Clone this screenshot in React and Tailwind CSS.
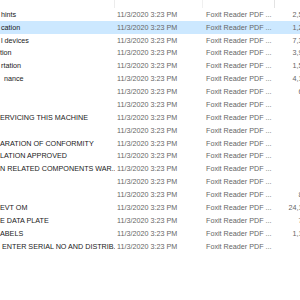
import React from 'react';

const rows = [
  { name: 'hints', indent: 'pl-[1px]', size: '2,512 KB' },
  { name: 'cation', indent: 'pl-[1px]', size: '1,204 KB', selected: true },
  { name: 'l devices', indent: 'pl-[1px]', size: '7,318 KB' },
  { name: 'tion', indent: 'pl-0', size: '3,941 KB' },
  { name: 'rtation', indent: 'pl-[1px]', size: '1,587 KB' },
  { name: 'nance', indent: 'pl-[4px]', size: '4,106 KB' },
  { name: '', indent: 'pl-0', size: '612 KB' },
  { name: '', indent: 'pl-0', size: '88 KB' },
  { name: 'ERVICING THIS MACHINE', indent: 'pl-0', size: '95 KB' },
  { name: '', indent: 'pl-0', size: '74 KB' },
  { name: 'ARATION OF CONFORMITY', indent: 'pl-0', size: '81 KB' },
  { name: 'LATION APPROVED', indent: 'pl-0', size: '63 KB' },
  { name: 'N RELATED COMPONENTS WAR...', indent: 'pl-0', size: '92 KB' },
  { name: '', indent: 'pl-0', size: '57 KB' },
  { name: '', indent: 'pl-0', size: '845 KB' },
  { name: 'EVT OM', indent: 'pl-0', size: '24,180 KB' },
  { name: 'E DATA PLATE', indent: 'pl-0', size: '731 KB' },
  { name: 'ABELS', indent: 'pl-0', size: '1,152 KB' },
  { name: 'ENTER SERIAL NO AND DISTRIB...', indent: 'pl-[2px]', size: '96 KB' },
];

export default function App() {
  return (
    <div
      className="w-[300px] h-[300px] bg-white overflow-hidden text-[7.2px] leading-none"
      style={{ fontFamily: '"Liberation Sans", Arial, sans-serif' }}
    >
      {/* column header, mostly scrolled off the top */}
      <div className="flex h-[8px] w-[340px]">
        <div className="w-[115px] border-r border-[#ececec]" />
        <div className="w-[88px] border-r border-[#f0f0f0]" />
        <div className="w-[72px] border-r border-[#e3e3e3]" />
        <div className="flex-1" />
      </div>

      <div className="flex flex-col w-[340px]">
        {rows.map((r, i) => (
          <div
            key={i}
            className={`flex items-center h-[12.88px] ${r.selected ? 'bg-[#cce8ff]' : ''}`}
          >
            <div className={`w-[115px] shrink-0 text-left ${r.indent} text-[#1a1a1a] whitespace-nowrap overflow-hidden`}>
              {r.name}
            </div>
            <div className="w-[88px] shrink-0 pl-[2px] text-[#666666] whitespace-nowrap">11/3/2020 3:23 PM</div>
            <div className="w-[72px] shrink-0 pl-[3px] text-[#666666] whitespace-nowrap">Foxit Reader PDF ...</div>
            <div className="w-[47px] shrink-0 text-right text-[#666666] whitespace-nowrap">{r.size}</div>
          </div>
        ))}
      </div>
    </div>
  );
}
